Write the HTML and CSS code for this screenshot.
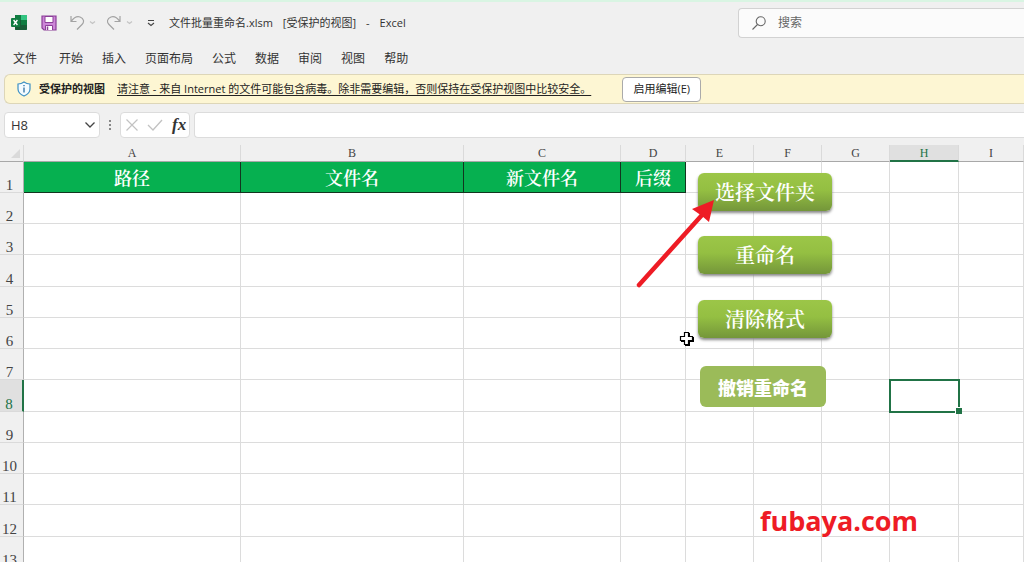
FILE: index.html
```html
<!DOCTYPE html>
<html lang="zh-CN">
<head>
<meta charset="utf-8">
<title>文件批量重命名.xlsm - Excel</title>
<link rel="stylesheet" href="styles.css">
</head>
<body>
<div class="app">
  <header class="titlebar">
    <div class="quick">
      <svg class="logo" viewBox="0 0 16 16" width="16" height="16" aria-label="Excel"><rect x="4" y="0" width="12" height="15" rx="1" fill="#21a366"/><path d="M4 0h6v5H4z" fill="#107c41"/><path d="M10 0h5a1 1 0 0 1 1 1v4h-6z" fill="#33c481"/><path d="M4 5h6v5H4z" fill="#185c37"/><path d="M10 5h6v5h-6z" fill="#107c41"/><path d="M4 10h12v4a1 1 0 0 1-1 1H5a1 1 0 0 1-1-1z" fill="#185c37"/><rect x="0" y="3" width="9" height="9" rx="1" fill="#107c41"/><path d="M2.6 5l3.8 5M6.4 5l-3.8 5" stroke="#fff" stroke-width="1.4"/></svg>
      <button class="icon-btn save" aria-label="保存"><svg viewBox="0 0 16 16" width="16" height="16"><path d="M1 1h14v14H3l-2-2z" fill="#cd86d8" stroke="#8b3f98" stroke-width="1.2"/><path d="M4 1.500h8v6H4z" fill="#fff" stroke="#8b3f98"/><path d="M4.500 15v-4.500h7V15" fill="#fff" stroke="#8b3f98"/><path d="M6.500 11.500V15" stroke="#8b3f98" stroke-width="1.500"/></svg></button>
      <button class="icon-btn undo" aria-label="撤消"><svg viewBox="0 0 26 16" width="26" height="16" fill="none" stroke="#a3a3a3" stroke-width="1.200"><path d="M1 1v5.500h5.500M1.300 6.200C4 2.500 7 1 10 2c4 1.500 4.500 5 2 7.500L7 14.500"/><path d="M20 6.500l2.500 2 2.500-2" stroke="#c4c4c4"/></svg></button>
      <button class="icon-btn redo" aria-label="恢复"><svg viewBox="0 0 26 16" width="26" height="16" fill="none" stroke="#a3a3a3" stroke-width="1.200"><path d="M13 1v5.500H7.500M12.700 6.200C10 2.500 7 1 4 2c-4 1.500-4.500 5-2 7.500l5 5"/><path d="M20 6.500l2.500 2 2.500-2" stroke="#c4c4c4"/></svg></button>
      <button class="icon-btn more" aria-label="自定义快速访问工具栏"><svg viewBox="0 0 8 8" width="8" height="8" fill="none" stroke="#444" stroke-width="1.100"><path d="M1 1.500h6M1 4l3 2.500L7 4"/></svg></button>
      <h1 class="title"><span>文件批量重命名.xlsm</span><span>[受保护的视图]</span><span>-</span><span>Excel</span></h1>
    </div>
    <label class="search">
      <svg viewBox="0 0 14 14" width="14" height="14" fill="none" stroke="#666" stroke-width="1.100"><circle cx="8.700" cy="5.300" r="4.500"/><path d="M5.500 8.500L.5 13.500"/></svg>
      <input type="search" placeholder="搜索" aria-label="搜索">
    </label>
  </header>
  <nav class="tabs">
    <button>文件</button><button>开始</button><button>插入</button><button>页面布局</button><button>公式</button><button>数据</button><button>审阅</button><button>视图</button><button>帮助</button>
  </nav>
  <section class="notice">
    <svg viewBox="0 0 14 16" width="14" height="16"><path d="M7 1c2 1.500 4 2 6 2v5c0 3.500-2.500 5.500-6 7-3.500-1.500-6-3.500-6-7V3c2 0 4-.5 6-2z" fill="#f4fbff" stroke="#3b8fc4" stroke-width="1.200"/><path d="M7 6.500v5M7 4v1.300" stroke="#2b6ea3" stroke-width="1.300"/></svg>
    <strong>受保护的视图</strong>
    <a href="#">请注意 - 来自 Internet 的文件可能包含病毒。除非需要编辑，否则保持在受保护视图中比较安全。</a>
    <button class="enable">启用编辑(E)</button>
  </section>
  <section class="formula">
    <div class="namebox"><input value="H8" aria-label="名称框"><svg viewBox="0 0 10 6" width="10" height="6" fill="none" stroke="#444" stroke-width="1.300"><path d="M.5.5L5 5 9.500.5"/></svg></div>
    <svg class="dots" viewBox="0 0 2 10" width="2" height="10" fill="#888"><path d="M0 0h2v2H0zM0 4h2v2H0zM0 8h2v2H0z"/></svg>
    <div class="fx">
      <button aria-label="取消"><svg viewBox="0 0 12 12" width="12" height="12" stroke="#c2c2c2" stroke-width="1.200"><path d="M.5.5l11 11M11.500.5l-11 11"/></svg></button>
      <button aria-label="输入"><svg viewBox="0 0 16 12" width="16" height="12" fill="none" stroke="#c2c2c2" stroke-width="1.300"><path d="M1 6l5 5L15 1"/></svg></button>
      <button class="fn" aria-label="插入函数">fx</button>
    </div>
    <input class="formula-input" aria-label="编辑栏">
  </section>
  <main class="sheet">
    <table>
      <colgroup><col class="c-row"><col class="c-a"><col class="c-b"><col class="c-c"><col class="c-d"><col class="c-e"><col class="c-e"><col class="c-e"><col class="c-h"><col></colgroup>
      <thead><tr><th class="corner"><svg viewBox="0 0 9 9" width="9" height="9" fill="#dadada"><path d="M9 0v9H0z"/></svg></th><th>A</th><th>B</th><th>C</th><th>D</th><th>E</th><th>F</th><th>G</th><th class="active">H</th><th>I</th></tr></thead>
      <tbody>
        <tr class="fields"><th>1</th><td>路径</td><td>文件名</td><td>新文件名</td><td>后缀</td><td></td><td></td><td></td><td></td><td></td></tr>
        <tr><th>2</th><td></td><td></td><td></td><td></td><td></td><td></td><td></td><td></td><td></td></tr>
        <tr><th>3</th><td></td><td></td><td></td><td></td><td></td><td></td><td></td><td></td><td></td></tr>
        <tr><th>4</th><td></td><td></td><td></td><td></td><td></td><td></td><td></td><td></td><td></td></tr>
        <tr><th>5</th><td></td><td></td><td></td><td></td><td></td><td></td><td></td><td></td><td></td></tr>
        <tr><th>6</th><td></td><td></td><td></td><td></td><td></td><td></td><td></td><td></td><td></td></tr>
        <tr><th>7</th><td></td><td></td><td></td><td></td><td></td><td></td><td></td><td></td><td></td></tr>
        <tr><th class="active">8</th><td></td><td></td><td></td><td></td><td></td><td></td><td></td><td class="selected"></td><td></td></tr>
        <tr><th>9</th><td></td><td></td><td></td><td></td><td></td><td></td><td></td><td></td><td></td></tr>
        <tr><th>10</th><td></td><td></td><td></td><td></td><td></td><td></td><td></td><td></td><td></td></tr>
        <tr><th>11</th><td></td><td></td><td></td><td></td><td></td><td></td><td></td><td></td><td></td></tr>
        <tr><th>12</th><td></td><td></td><td></td><td></td><td></td><td></td><td></td><td></td><td></td></tr>
        <tr><th>13</th><td></td><td></td><td></td><td></td><td></td><td></td><td></td><td></td><td></td></tr>
      </tbody>
    </table>
    <button class="shape choose">选择文件夹</button>
    <button class="shape rename">重命名</button>
    <button class="shape clear">清除格式</button>
    <button class="shape flat">撤销重命名</button>
    <svg class="arrow" viewBox="0 0 80 92" width="80" height="92"><path d="M4 87L67 17" stroke="#ee1c25" stroke-width="4.500" stroke-linecap="round"/><path d="M79 2L74 24L67 18L57 11Z" fill="#ee1c25"/></svg>
    <svg class="cursor" viewBox="0 0 16 16" width="16" height="16"><path d="M6 2h5v4h4v5h-4v4H6v-4H2V6h4z" fill="#000"/><path d="M5.500 1.500h4v4h4v4h-4v4h-4v-4h-4v-4h4z" fill="#fff" stroke="#000" stroke-width="1.200"/></svg>
    <div class="watermark">fubaya.com</div>
  </main>
</div>
</body>
</html>
```
FILE: styles.css
```css
* { box-sizing: border-box; }
body {
  margin: 0;
  background: #f0f0f0;
  color: #333;
  font: 12px/16px "Open Sans", "Noto Sans CJK SC", sans-serif;
}
button, input { font: inherit; color: inherit; }
button { padding: 0; border: 0; background: none; }
svg { display: block; flex: none; }
.app {
  display: flex;
  flex-direction: column;
  height: 100vh;
  overflow: hidden;
  border-top: 2px solid #d9f5e3;
}

.titlebar { display: flex; align-items: center; height: 41px; }
.quick { display: flex; align-items: center; width: 738px; padding-left: 11px; flex: none; }
.save { margin-left: 14px; }
.undo { margin-left: 13px; }
.redo { margin-left: 11px; }
.more { margin-left: 14px; }
.title { display: flex; gap: 10px; margin: 0 0 0 14px; font-size: 11px; font-weight: 400; }
.search {
  display: flex;
  align-items: center;
  gap: 12px;
  flex: 1;
  height: 30px;
  margin-top: 1px;
  padding-left: 13px;
  border: 1px solid #d2d2d2;
  border-right: 0;
  border-radius: 4px 0 0 4px;
  background: #fbfbfb;
}
.search input { flex: 1; min-width: 0; padding: 0; border: 0; outline: 0; background: none; font-size: 12px; }
.search input::placeholder { color: #666; opacity: 1; }

.tabs { display: flex; gap: 19px; height: 31px; padding: 0 13px; align-items: center; }
.tabs button { white-space: nowrap; }
.tabs button:first-child { margin-right: 3px; }

.notice {
  display: flex;
  align-items: center;
  height: 30px;
  margin-left: 4px;
  padding-left: 12px;
  border: 1px solid #ddd6b8;
  border-right: 0;
  border-radius: 6px 0 0 6px;
  background: #fdf6d3;
  font-size: 11px;
  color: #222;
  white-space: nowrap;
}
.notice strong { margin: 0 12px 0 8px; }
.notice a { color: inherit; text-underline-offset: 2px; }
.enable {
  width: 79px;
  height: 25px;
  margin-left: 31px;
  border: 1px solid #aaa;
  border-radius: 4px;
  background: #fff;
}

.formula { display: flex; align-items: center; height: 41px; padding-left: 4px; }
.namebox, .fx, .formula-input {
  height: 26px;
  border: 1px solid #dcdcdc;
  border-radius: 4px;
  background: #fff;
}
.namebox { display: flex; align-items: center; width: 96px; padding: 0 4px 0 6px; }
.namebox input { flex: 1; min-width: 0; padding: 0; border: 0; outline: 0; background: none; font-size: 13px; }
.dots { margin: 0 9px 0 9px; }
.fx { display: flex; align-items: center; gap: 9px; width: 70px; padding-left: 5px; }
.fn { font: italic 700 17px/20px "Liberation Serif", serif; }
.formula-input { flex: 1; min-width: 0; margin-left: 4px; border-right: 0; border-radius: 4px 0 0 4px; outline: 0; }

.sheet { position: relative; flex: 1; overflow: hidden; background: #fff; }
table { width: 100%; table-layout: fixed; border-collapse: separate; border-spacing: 0; }
.c-row { width: 24px; }
.c-a { width: 217px; }
.c-b { width: 223px; }
.c-c { width: 157px; }
.c-d { width: 65px; }
.c-e { width: 68px; }
.c-h { width: 69px; }
th {
  padding: 0;
  background: #f0f0f0;
  color: #444;
  font: 400 15px/14px "Liberation Serif", serif;
}
thead th {
  height: 17px;
  border-right: 1px solid #dadada;
  border-bottom: 1px solid #a8a8a8;
  font-size: 12px;
}
.corner svg { margin-left: 11px; }
thead .active { background: #e0e0e0; border-bottom: 2px solid #217346; color: #217346; }
tbody tr { height: 31px; }
tbody tr:nth-child(4n) { height: 32px; }
tbody th {
  padding-right: 4px;
  border-right: 1px solid #b0b0b0;
  border-bottom: 1px solid #dadada;
  vertical-align: bottom;
}
tbody .active { background: #e0e0e0; border-right: 2px solid #217346; color: #217346; }
td { padding: 0; border-right: 1px solid #dcdcdc; border-bottom: 1px solid #dcdcdc; }
.fields td {
  color: #fff;
  font: 600 18px/24px "Noto Serif CJK SC", "Noto Sans CJK SC", serif;
  text-align: center;
}
.fields td:nth-child(-n+5) { background: #06b050; border-color: #12351f; }
.selected { position: relative; }
.selected::before {
  content: "";
  position: absolute;
  inset: -1px -2px -2px -1px;
  border: 2px solid #217346;
}
.selected::after {
  content: "";
  position: absolute;
  right: -4px;
  bottom: -3px;
  width: 6px;
  height: 6px;
  border: solid #fff;
  border-width: 1px 0 0 1px;
  background: #217346;
}

.shape {
  position: absolute;
  left: 698px;
  width: 134px;
  height: 38px;
  border-radius: 6px;
  background: linear-gradient(#9cc648, #94bf42 45%, #74963a);
  box-shadow: 0 2px 3px #888;
  color: #fff;
  font: 600 20px/24px "Noto Serif CJK SC", "Noto Sans CJK SC", serif;
}
.choose { top: 28px; }
.rename { top: 91px; }
.clear { top: 155px; }
.flat {
  top: 221px;
  left: 700px;
  width: 126px;
  height: 41px;
  background: #9bbb59;
  box-shadow: none;
  font: 900 18px/24px "Noto Sans CJK SC", sans-serif;
}
.arrow { position: absolute; left: 635px; top: 53px; }
.cursor { position: absolute; left: 679px; top: 186px; }
.watermark {
  position: absolute;
  left: 760px;
  top: 358px;
  color: #ee1c25;
  font: 700 27px/36px "Open Sans", sans-serif;
}
```
